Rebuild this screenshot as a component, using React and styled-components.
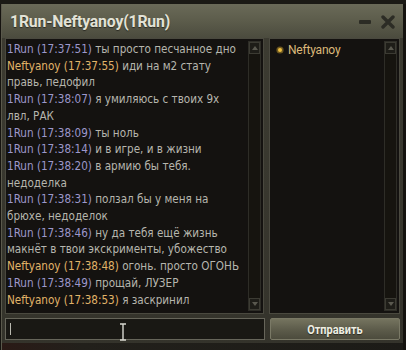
import React from "react";
import styled, { createGlobalStyle } from "styled-components";

const GlobalStyle = createGlobalStyle`
  html, body {
    margin: 0;
    padding: 0;
    background: #15130f;
    overflow: hidden;
  }
`;

const messages = [
  { who: "1Run", time: "17:37:51", text: "ты просто песчанное дно" },
  { who: "Neftyanoy", time: "17:37:55", text: "иди на м2 стату правь, педофил" },
  { who: "1Run", time: "17:38:07", text: "я умиляюсь с твоих 9х лвл, РАК" },
  { who: "1Run", time: "17:38:09", text: "ты ноль" },
  { who: "1Run", time: "17:38:14", text: "и в игре, и в жизни" },
  { who: "1Run", time: "17:38:20", text: "в армию бы тебя. недоделка" },
  { who: "1Run", time: "17:38:31", text: "ползал бы у меня на брюхе, недоделок" },
  { who: "1Run", time: "17:38:46", text: "ну да тебя ещё жизнь макнёт в твои экскрименты, убожество" },
  { who: "Neftyanoy", time: "17:38:48", text: "огонь. просто ОГОНЬ" },
  { who: "1Run", time: "17:38:49", text: "прощай, ЛУЗЕР" },
  { who: "Neftyanoy", time: "17:38:53", text: "я заскринил" },
];

const Window = styled.div`
  width: 406px;
  height: 350px;
  display: flex;
  flex-direction: column;
  background: #15130f;
  font-family: "DejaVu Sans Condensed", "Liberation Sans", sans-serif;
`;

const TopStrip = styled.div`
  height: 4px;
  background: #1b1a15;
`;

const Frame = styled.div`
  flex: 1;
  display: flex;
  flex-direction: column;
  background: linear-gradient(180deg, #3d3c32 0%, #34332b 100%);
  border-left: 1px solid #5a594c;
  margin-left: 1px;
  margin-right: 3px;
`;

const TitleBar = styled.div`
  height: 34px;
  display: flex;
  align-items: center;
  padding: 0 8px 0 8px;
  background: linear-gradient(180deg, #6a6a58 0%, #5c5c4b 50%, #4b4b3e 100%);
`;

const Title = styled.div`
  flex: 1;
  color: #e2e2d6;
  font-family: "Roboto", "Liberation Sans", sans-serif;
  font-weight: 700;
  font-size: 17px;
  letter-spacing: -0.2px;
  transform: scaleX(0.93);
  transform-origin: left center;
  text-shadow: 0 1px 1px #2a2a22;
`;

const TitleButtons = styled.div`
  display: flex;
  align-items: center;
  gap: 10px;
  margin-top: 2px;
`;

const Body = styled.div`
  display: flex;
  gap: 5px;
  padding: 0 3px 0 3px;
  height: 276px;
`;

const Panel = styled.div`
  width: ${(p) => p.w}px;
  background: #141210;
  border: 1px solid #4a493f;
  box-sizing: border-box;
  display: flex;
  position: relative;
  overflow: hidden;
`;

const Messages = styled.div`
  flex: 1;
  padding: 2px 8px 0 1px;
  font-size: 11.6px;
  line-height: 16.7px;
  color: #b6b6ae;
  overflow: hidden;
`;

const Line = styled.div``;

const Name = styled.span`
  color: ${(p) => (p.orange ? "#e1b469" : "#9d98cc")};
`;

const ScrollBar = styled.div`
  width: 13px;
  flex-shrink: 0;
  margin: 2px 2px 2px 0;
  border: 1px solid #2e2d27;
  box-sizing: border-box;
  display: flex;
  flex-direction: column;
  justify-content: space-between;
  background: #16140f;
`;

const Arrow = styled.div`
  height: 12px;
  border: 1px solid #3c3b33;
  box-sizing: border-box;
  display: flex;
  align-items: center;
  justify-content: center;
  background: #1e1d18;
`;

const Users = styled.div`
  flex: 1;
  padding: 3px 6px;
  line-height: 16.7px;
`;

const User = styled.div`
  display: flex;
  align-items: center;
  gap: 4px;
  color: #dcb97a;
  font-family: "Roboto", "Liberation Sans", sans-serif;
  font-size: 12px;
  letter-spacing: -0.2px;
`;

const Bottom = styled.div`
  display: flex;
  gap: 5px;
  padding: 4px 3px 0 3px;
`;

const Input = styled.div`
  width: 261px;
  height: 22px;
  box-sizing: border-box;
  border: 1px solid #66655a;
  background: #191814;
  position: relative;
`;

const Caret = styled.div`
  position: absolute;
  left: 4px;
  top: 4px;
  width: 1px;
  height: 12px;
  background: #b9b9b0;
`;

const Pointer = styled.svg`
  position: absolute;
  left: 113px;
  top: 4px;
`;

const SendButton = styled.div`
  width: 130px;
  height: 22px;
  box-sizing: border-box;
  border: 1px solid #7a7966;
  border-radius: 2px;
  background: linear-gradient(180deg, #75745f 0%, #5e5d4c 50%, #4c4b3d 100%);
  display: flex;
  align-items: center;
  justify-content: center;
`;

const SendLabel = styled.span`
  color: #eeeee2;
  font-family: "Roboto", "Liberation Sans", sans-serif;
  font-weight: 700;
  font-size: 13px;
  transform: scaleX(0.84);
  text-shadow: 0 1px 1px #2a2a22;
`;

const BottomStrip = styled.div`
  flex: 1;
  margin-top: 3px;
  background: linear-gradient(90deg, #2a1a16 0%, #22201b 20%, #1c1b17 100%);
`;

const ArrowIcon = ({ down }) => (
  <svg width="6" height="4" viewBox="0 0 6 4">
    <path d={down ? "M0 0 L6 0 L3 4 Z" : "M0 4 L6 4 L3 0 Z"} fill="#5a594f" />
  </svg>
);

const Scroll = () => (
  <ScrollBar>
    <Arrow>
      <ArrowIcon />
    </Arrow>
    <Arrow>
      <ArrowIcon down />
    </Arrow>
  </ScrollBar>
);

const App = () => {
  return (
    <>
      <GlobalStyle />
      <Window>
        <TopStrip />
        <Frame>
          <TitleBar>
            <Title>1Run-Neftyanoy(1Run)</Title>
            <TitleButtons>
              <svg width="12" height="6" viewBox="0 0 12 6">
                <rect x="0" y="1" width="12" height="4" rx="1" fill="#2c2c25" />
              </svg>
              <svg width="14" height="14" viewBox="0 0 14 14">
                <path d="M2 2 L12 12 M12 2 L2 12" stroke="#2c2c25" strokeWidth="3.4" strokeLinecap="round" />
              </svg>
            </TitleButtons>
          </TitleBar>
          <Body>
            <Panel w={261}>
              <Messages>
                {messages.map((m, i) => (
                  <Line key={i}>
                    <Name orange={m.who === "Neftyanoy"}>
                      {m.who} ({m.time})
                    </Name>{" "}
                    {m.text}
                  </Line>
                ))}
              </Messages>
              <Scroll />
            </Panel>
            <Panel w={132}>
              <Users>
                <User>
                  <svg width="8" height="8" viewBox="0 0 8 8">
                    <circle cx="4" cy="4" r="3.6" fill="#6b5620" />
                    <circle cx="4" cy="4" r="2" fill="#f0c040" />
                  </svg>
                  Neftyanoy
                </User>
              </Users>
              <Scroll />
            </Panel>
          </Body>
          <Bottom>
            <Input>
              <Caret />
              <Pointer width="8" height="18" viewBox="0 0 8 18">
                <path d="M1 1 H7 M4 1 V17 M1 17 H7" stroke="#d8d8d0" strokeWidth="1.4" />
              </Pointer>
            </Input>
            <SendButton>
              <SendLabel>Отправить</SendLabel>
            </SendButton>
          </Bottom>
          <BottomStrip />
        </Frame>
      </Window>
    </>
  );
};

export default App;
